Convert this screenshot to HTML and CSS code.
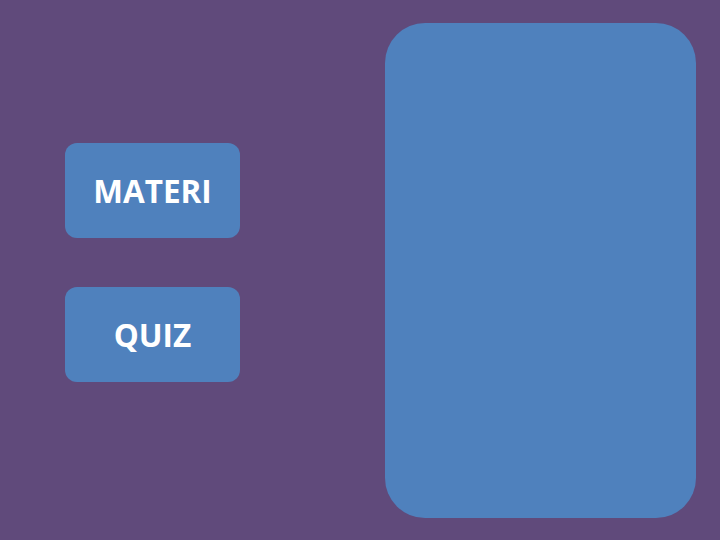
FILE: index.html
```html
<!DOCTYPE html>
<html>
<head>
<meta charset="utf-8">
<link rel="stylesheet" href="styles.css">
</head>
<body>
<div class="stage">
  <div class="menu">
    <div class="btn">MATERI</div>
    <div class="btn">QUIZ</div>
  </div>
  <div class="panel"></div>
</div>
</body>
</html>
```
FILE: styles.css
```css
html, body {
  margin: 0;
  padding: 0;
  width: 720px;
  height: 540px;
  overflow: hidden;
  background: #604a7b;
}
.stage {
  display: flex;
  align-items: flex-start;
  padding-left: 65px;
}
.menu {
  display: flex;
  flex-direction: column;
  gap: 49px;
  padding-top: 143px;
}
.btn {
  width: 175px;
  height: 95px;
  border-radius: 12px;
  background: #4f81bd;
  color: #ffffff;
  font-family: "Open Sans", sans-serif;
  font-weight: 700;
  font-size: 31.5px;
  display: flex;
  align-items: center;
  justify-content: center;
}
.panel {
  margin-left: 145px;
  margin-top: 23px;
  width: 311px;
  height: 495px;
  border-radius: 40px;
  background: #4f81bd;
}
```
